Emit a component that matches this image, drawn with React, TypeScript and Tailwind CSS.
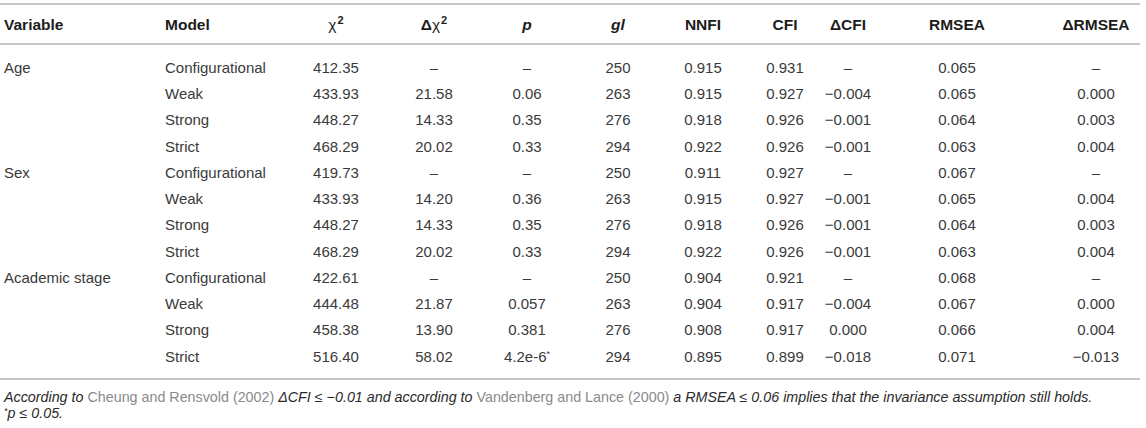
const COLS = [
  "w-[161px] justify-start pl-[4px]",
  "w-[129px] justify-start pl-[4px]",
  "w-[92px] justify-center",
  "w-[104px] justify-center",
  "w-[82px] justify-center",
  "w-[100px] justify-center",
  "w-[70px] justify-center",
  "w-[94px] justify-center",
  "w-[32px] justify-center",
  "w-[186px] justify-center",
  "w-[92px] justify-center",
];

type Row = string[];

const ROWS: Row[] = [
  ["Age", "Configurational", "412.35", "–", "–", "250", "0.915", "0.931", "–", "0.065", "–"],
  ["", "Weak", "433.93", "21.58", "0.06", "263", "0.915", "0.927", "−0.004", "0.065", "0.000"],
  ["", "Strong", "448.27", "14.33", "0.35", "276", "0.918", "0.926", "−0.001", "0.064", "0.003"],
  ["", "Strict", "468.29", "20.02", "0.33", "294", "0.922", "0.926", "−0.001", "0.063", "0.004"],
  ["Sex", "Configurational", "419.73", "–", "–", "250", "0.911", "0.927", "–", "0.067", "–"],
  ["", "Weak", "433.93", "14.20", "0.36", "263", "0.915", "0.927", "−0.001", "0.065", "0.004"],
  ["", "Strong", "448.27", "14.33", "0.35", "276", "0.918", "0.926", "−0.001", "0.064", "0.003"],
  ["", "Strict", "468.29", "20.02", "0.33", "294", "0.922", "0.926", "−0.001", "0.063", "0.004"],
  ["Academic stage", "Configurational", "422.61", "–", "–", "250", "0.904", "0.921", "–", "0.068", "–"],
  ["", "Weak", "444.48", "21.87", "0.057", "263", "0.904", "0.917", "−0.004", "0.067", "0.000"],
  ["", "Strong", "458.38", "13.90", "0.381", "276", "0.908", "0.917", "0.000", "0.066", "0.004"],
  ["", "Strict", "516.40", "58.02", "4.2e-6*", "294", "0.895", "0.899", "−0.018", "0.071", "−0.013"],
];

function Cell({ i, children }: { i: number; children: React.ReactNode }) {
  return <div className={`flex shrink-0 items-center whitespace-nowrap ${COLS[i]}`}>{children}</div>;
}

function PValue({ v }: { v: string }) {
  if (v.endsWith("*")) {
    return (
      <span>
        {v.slice(0, -1)}
        <sup className="text-[9px]">*</sup>
      </span>
    );
  }
  return <span>{v}</span>;
}

export default function App() {
  const headers: React.ReactNode[] = [
    "Variable",
    "Model",
    <span key="c">
      <span className="font-normal">χ</span>
      <sup className="ml-[1px] text-[11px]">2</sup>
    </span>,
    <span key="dc">
      Δ<span className="font-normal">χ</span>
      <sup className="ml-[1px] text-[11px]">2</sup>
    </span>,
    <i key="p">p</i>,
    <i key="gl">gl</i>,
    "NNFI",
    "CFI",
    "ΔCFI",
    "RMSEA",
    "ΔRMSEA",
  ];

  return (
    <div className="w-[1146px] bg-white pt-[3px] font-['Liberation_Sans',Arial,sans-serif] text-[15px] text-[#3a3a3a]">
      <div className="w-[1140px]">
        <div className="h-[2px] bg-[#c6c6c6]" />
        <div className="flex h-[38px] pt-[1px] text-[15.5px] font-bold text-[#1c1c1c]">
          {headers.map((h, i) => (
            <Cell key={i} i={i}>
              {h}
            </Cell>
          ))}
        </div>
        <div className="h-[2px] bg-[#c6c6c6]" />
        <div className="pb-[8px] pt-[10px]">
          {ROWS.map((r, ri) => (
            <div key={ri} className="flex h-[26.25px]">
              {r.map((v, i) => (
                <Cell key={i} i={i}>
                  {i === 4 ? <PValue v={v} /> : v}
                </Cell>
              ))}
            </div>
          ))}
        </div>
        <div className="h-[2px] bg-[#c6c6c6]" />
      </div>
      <div className="pl-[4px] pt-[9px] text-[14.3px] italic leading-4 text-[#2a2a2a]">
        <div>
          According to <span className="not-italic text-[#8a8a8a]">Cheung and Rensvold (2002)</span> ΔCFI ≤ −0.01 and
          according to <span className="not-italic text-[#8a8a8a]">Vandenberg and Lance (2000)</span> a RMSEA ≤ 0.06
          implies that the invariance assumption still holds.
        </div>
        <div>
          <sup className="text-[9px]">*</sup>p ≤ 0.05.
        </div>
      </div>
    </div>
  );
}
